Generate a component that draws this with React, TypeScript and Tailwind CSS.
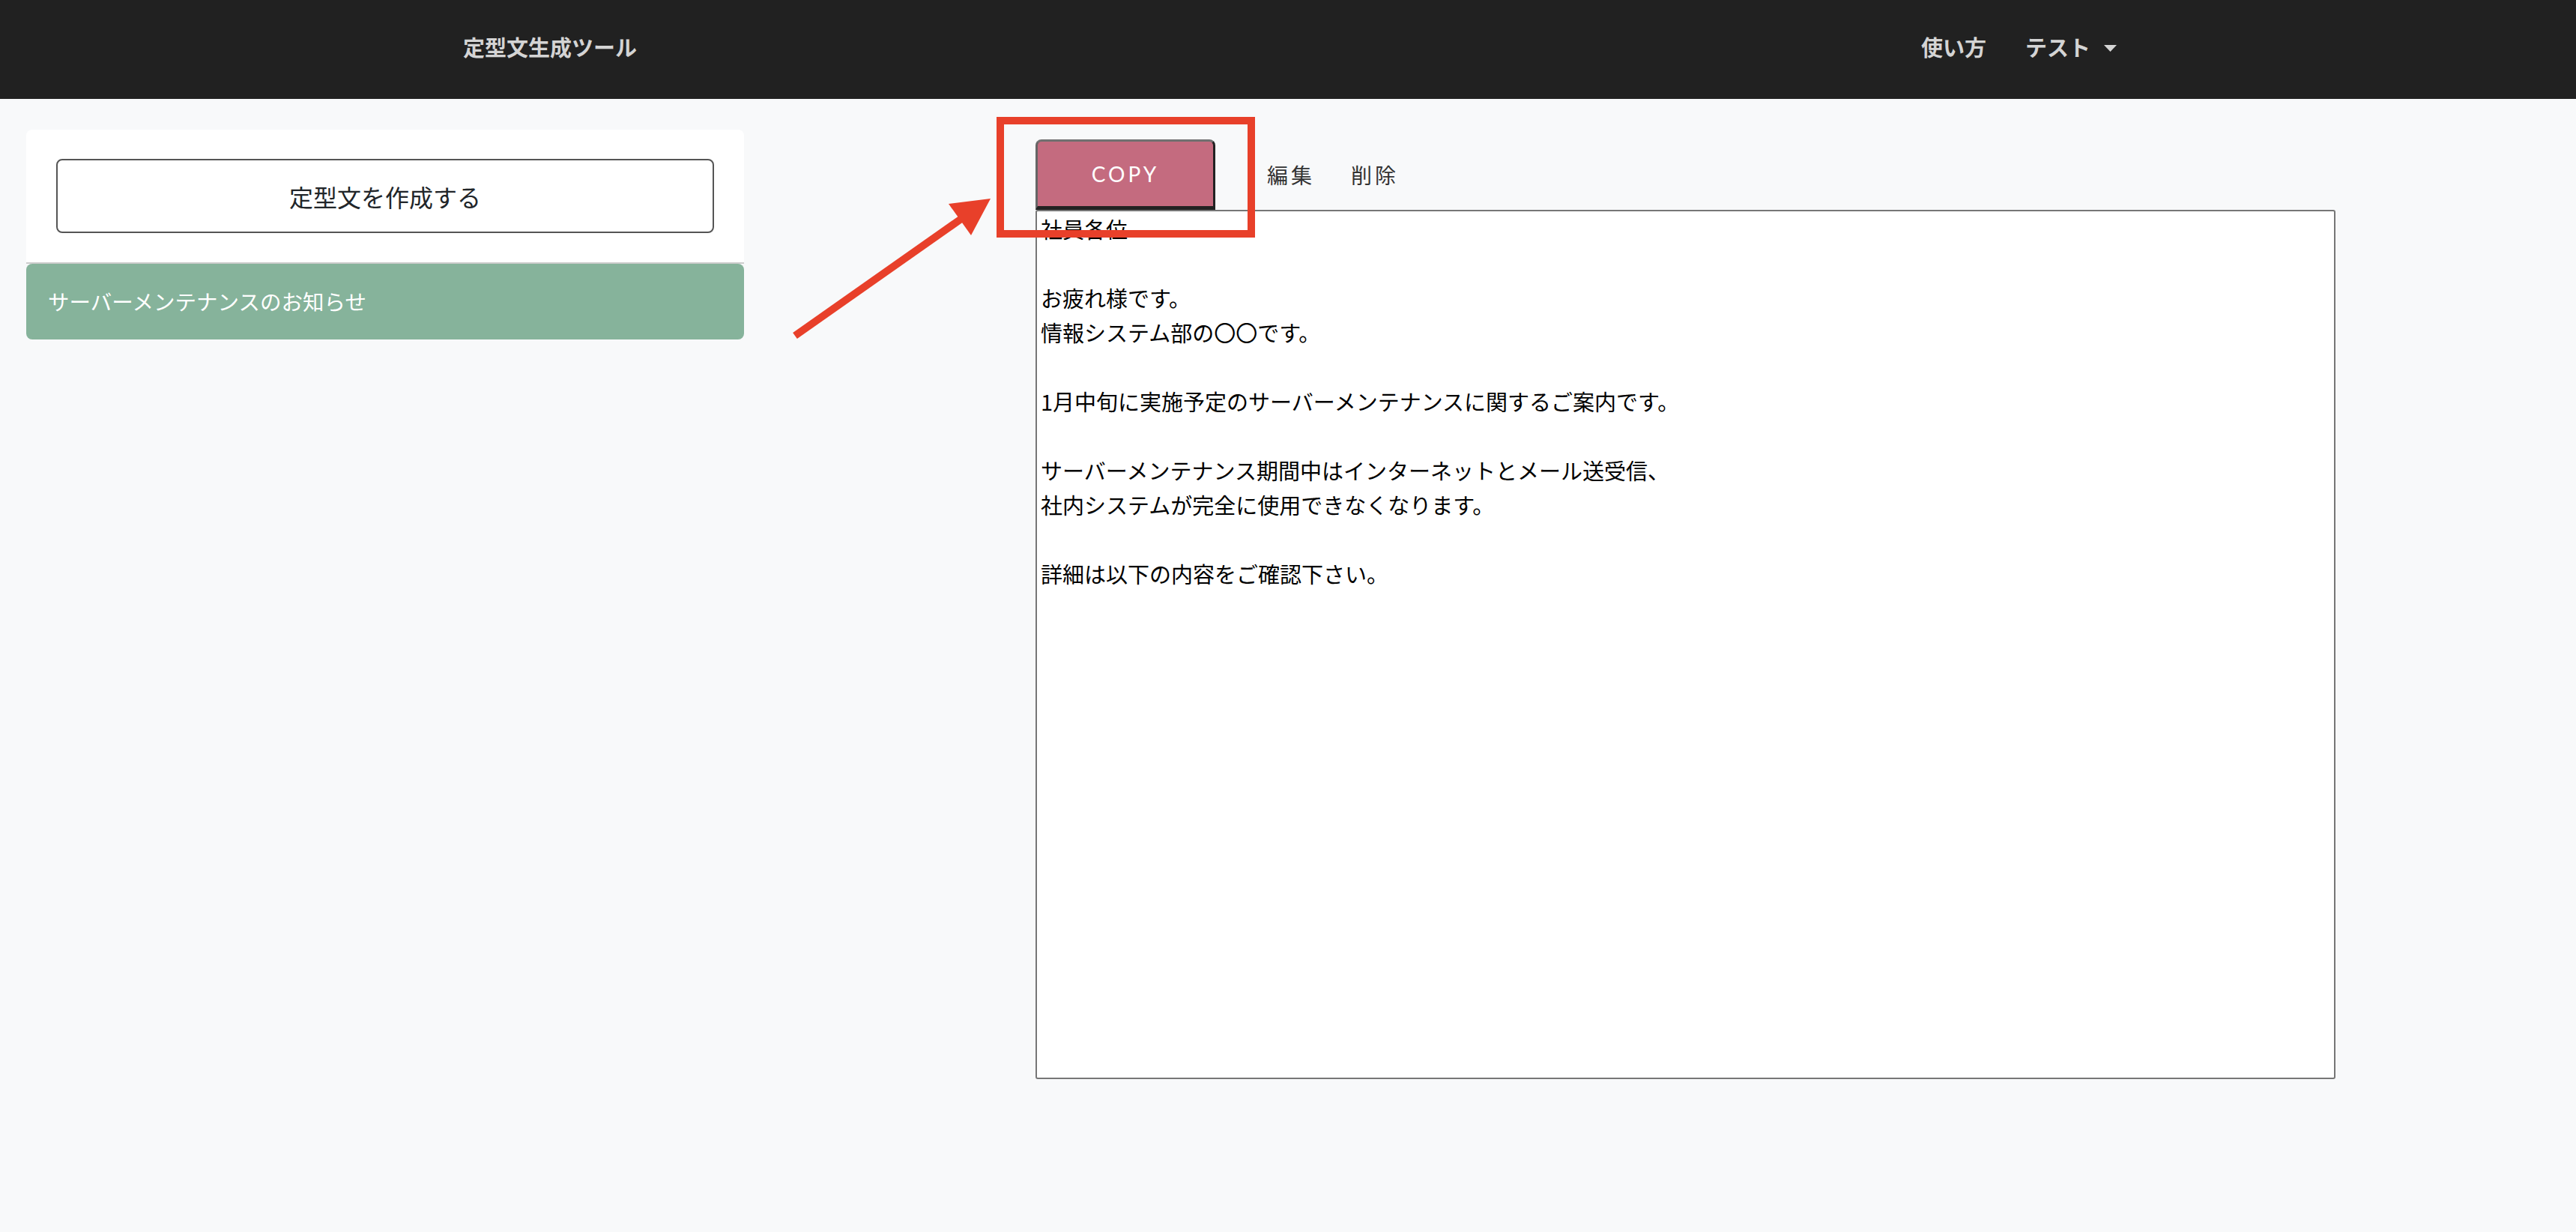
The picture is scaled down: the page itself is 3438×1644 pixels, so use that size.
import {FC} from "react";

const body = [
  "社員各位",
  "",
  "お疲れ様です。",
  "情報システム部の〇〇です。",
  "",
  "1月中旬に実施予定のサーバーメンテナンスに関するご案内です。",
  "",
  "サーバーメンテナンス期間中はインターネットとメール送受信、",
  "社内システムが完全に使用できなくなります。",
  "",
  "詳細は以下の内容をご確認下さい。",
].join("\n");

const App: FC = () => {
  return (
    <div className="relative min-h-screen bg-[#f8f9fa] font-['Noto_Sans_CJK_JP','Noto_Sans',sans-serif]">
      <header className="h-[132px] bg-[#212121] flex items-center justify-between pl-[618px] pr-[613px] pb-[6px] text-[#d4d4d4] font-bold text-[29px]">
        <div>定型文生成ツール</div>
        <nav className="flex items-center">
          <span>使い方</span>
          <span className="ml-[52px]">テスト</span>
          <svg className="ml-[18px] mt-[2px]" width="17" height="9" viewBox="0 0 17 9">
            <polygon points="0,0 17,0 8.5,9" fill="#d4d4d4" />
          </svg>
        </nav>
      </header>

      <main className="flex items-start pl-[35px] pt-[41px]">
        {/* sidebar */}
        <div className="w-[958px]">
          <div className="bg-white rounded-t-lg border-b-2 border-[#cccccc] px-[40px] py-[39px]">
            <button className="w-full h-[99px] border-2 border-[#555] rounded-lg bg-white text-[32px] text-[#212529]">
              定型文を作成する
            </button>
          </div>
          <div className="h-[101px] bg-[#86b39b] rounded-lg flex items-center pl-[29px] text-white text-[28.5px] cursor-pointer">
            サーバーメンテナンスのお知らせ
          </div>
        </div>

        {/* editor */}
        <div className="ml-[389px] w-[1735px] pt-[13px]">
          <div className="flex items-center">
            <button className="w-[240px] h-[94px] bg-[#c46b7f] text-white text-[28px] tracking-[4px] font-['Lato',sans-serif] rounded-t-[8px] border-t-[3px] border-t-[#707070] border-l-[3px] border-l-[#666] border-r-[3px] border-r-[#222] border-b-[5px] border-b-[#222]">
              COPY
            </button>
            <span className="ml-[69px] text-[28px] text-[#333] tracking-[4px]">編集</span>
            <span className="ml-[48px] text-[28px] text-[#333] tracking-[4px]">削除</span>
          </div>
          <textarea
            readOnly
            value={body}
            className="block w-full h-[1160px] bg-white border-2 border-[#767676] rounded-[3px] resize-none px-[5px] pt-0 text-[29px] leading-[46px] text-black outline-none"
          />
        </div>
      </main>

      {/* annotation overlay */}
      <div className="absolute left-[1330px] top-[156px] w-[345px] h-[161px] border-[10px] border-[#e8402a] pointer-events-none" />
      <svg className="absolute left-0 top-0 pointer-events-none" width="3438" height="1644">
        <line x1="1061" y1="448" x2="1290" y2="287" stroke="#e8402a" strokeWidth="10" />
        <polygon points="1322,265 1266,272 1296,314" fill="#e8402a" />
      </svg>
    </div>
  );
};

export default App;
